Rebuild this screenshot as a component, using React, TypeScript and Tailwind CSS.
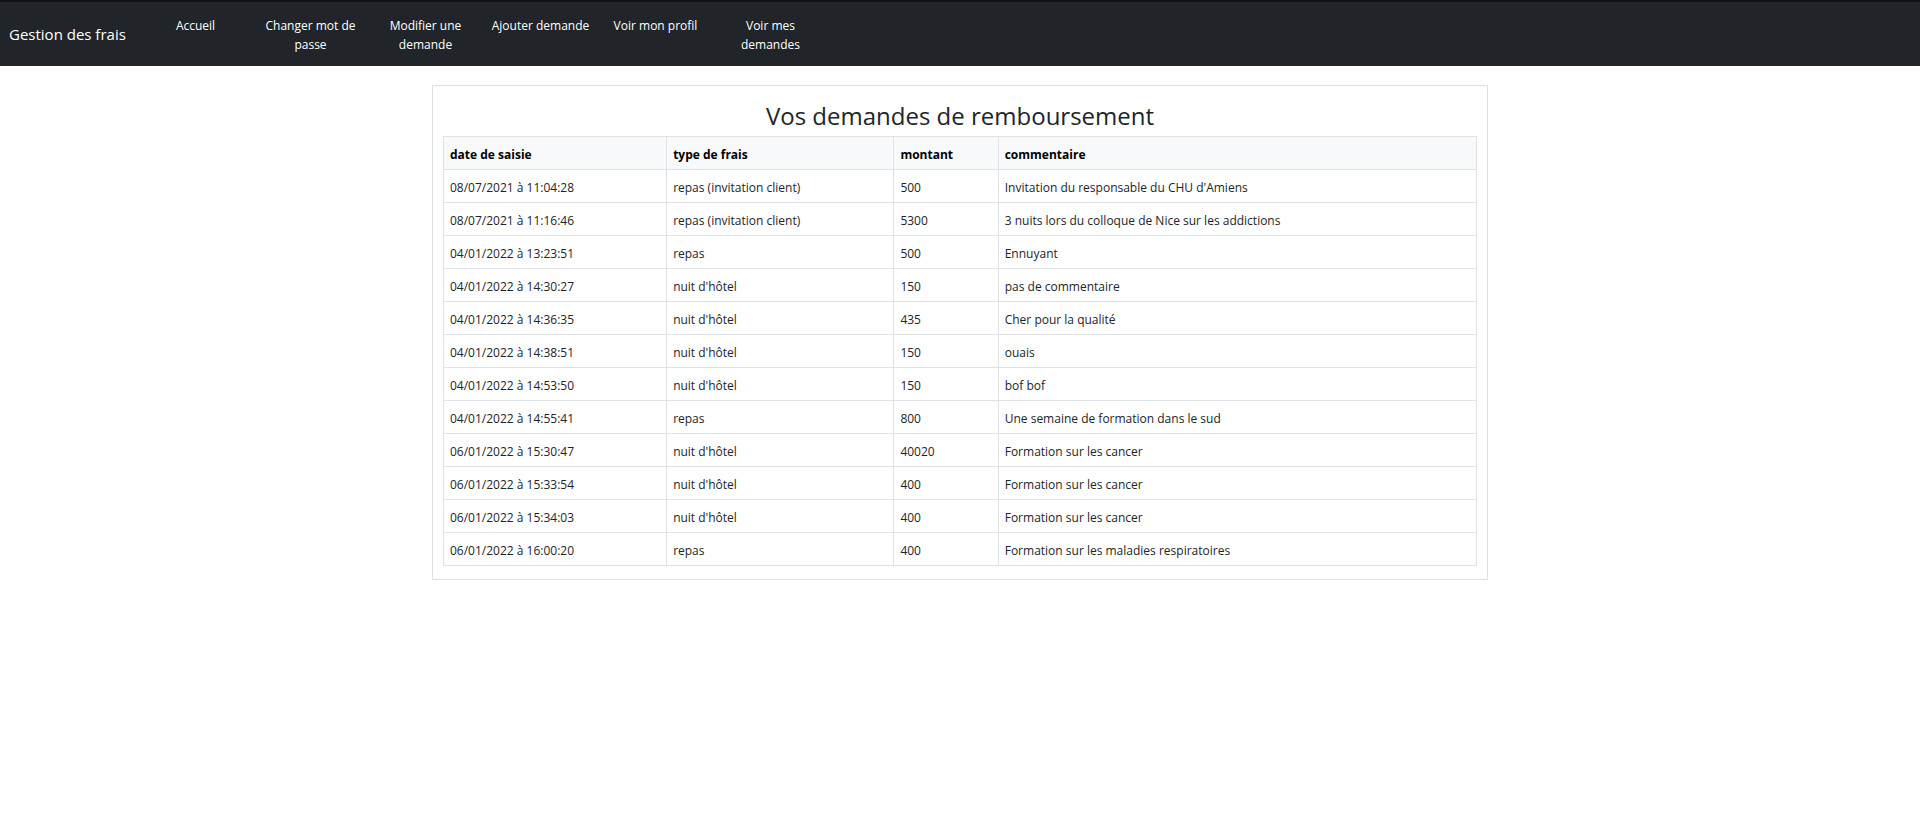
const navItems = [
  "Accueil",
  "Changer mot de passe",
  "Modifier une demande",
  "Ajouter demande",
  "Voir mon profil",
  "Voir mes demandes",
];

const columns = ["date de saisie", "type de frais", "montant", "commentaire"];

const requests = [
  ["08/07/2021 à 11:04:28", "repas (invitation client)", "500", "Invitation du responsable du CHU d'Amiens"],
  ["08/07/2021 à 11:16:46", "repas (invitation client)", "5300", "3 nuits lors du colloque de Nice sur les addictions"],
  ["04/01/2022 à 13:23:51", "repas", "500", "Ennuyant"],
  ["04/01/2022 à 14:30:27", "nuit d'hôtel", "150", "pas de commentaire"],
  ["04/01/2022 à 14:36:35", "nuit d'hôtel", "435", "Cher pour la qualité"],
  ["04/01/2022 à 14:38:51", "nuit d'hôtel", "150", "ouais"],
  ["04/01/2022 à 14:53:50", "nuit d'hôtel", "150", "bof bof"],
  ["04/01/2022 à 14:55:41", "repas", "800", "Une semaine de formation dans le sud"],
  ["06/01/2022 à 15:30:47", "nuit d'hôtel", "40020", "Formation sur les cancer"],
  ["06/01/2022 à 15:33:54", "nuit d'hôtel", "400", "Formation sur les cancer"],
  ["06/01/2022 à 15:34:03", "nuit d'hôtel", "400", "Formation sur les cancer"],
  ["06/01/2022 à 16:00:20", "repas", "400", "Formation sur les maladies respiratoires"],
];

function Navbar() {
  return (
    <nav className="flex items-stretch border-t-2 border-[#111111] bg-[#212529] text-white">
      <a href="#" className="flex w-[138px] shrink-0 items-center pl-[9px] text-[15px] whitespace-nowrap">
        Gestion des frais
      </a>
      <ul className="flex grow pt-3.5 pb-3 text-[12px] leading-[19px]">
        {navItems.map((item) => (
          <li key={item} className="w-[115px] px-1.5 text-center">
            <a href="#">{item}</a>
          </li>
        ))}
      </ul>
    </nav>
  );
}

export default function App() {
  return (
    <div className="font-['Open_Sans',sans-serif] text-[#212529]">
      <Navbar />
      <main className="mx-auto mt-[19px] w-[55%] border border-[#dee2e6] px-2.5 pt-3.5 pb-[13px]">
        <h1 className="mb-1 text-center text-[24px] leading-8">Vos demandes de remboursement</h1>
        <table className="w-full table-fixed border-collapse text-left text-[12px] leading-5">
          <colgroup>
            <col className="w-[21.6%]" />
            <col className="w-[22%]" />
            <col className="w-[10.1%]" />
            <col />
          </colgroup>
          <thead className="bg-[#f8f9fa] text-black">
            <tr>
              {columns.map((column) => (
                <th key={column} scope="col" className="border border-[#dee2e6] px-1.5 pt-2 pb-1 font-bold">
                  {column}
                </th>
              ))}
            </tr>
          </thead>
          <tbody>
            {requests.map((request) => (
              <tr key={request[0]}>
                {request.map((value, index) => (
                  <td key={columns[index]} className="border border-[#dee2e6] px-1.5 pt-2 pb-1">
                    {value}
                  </td>
                ))}
              </tr>
            ))}
          </tbody>
        </table>
      </main>
    </div>
  );
}
